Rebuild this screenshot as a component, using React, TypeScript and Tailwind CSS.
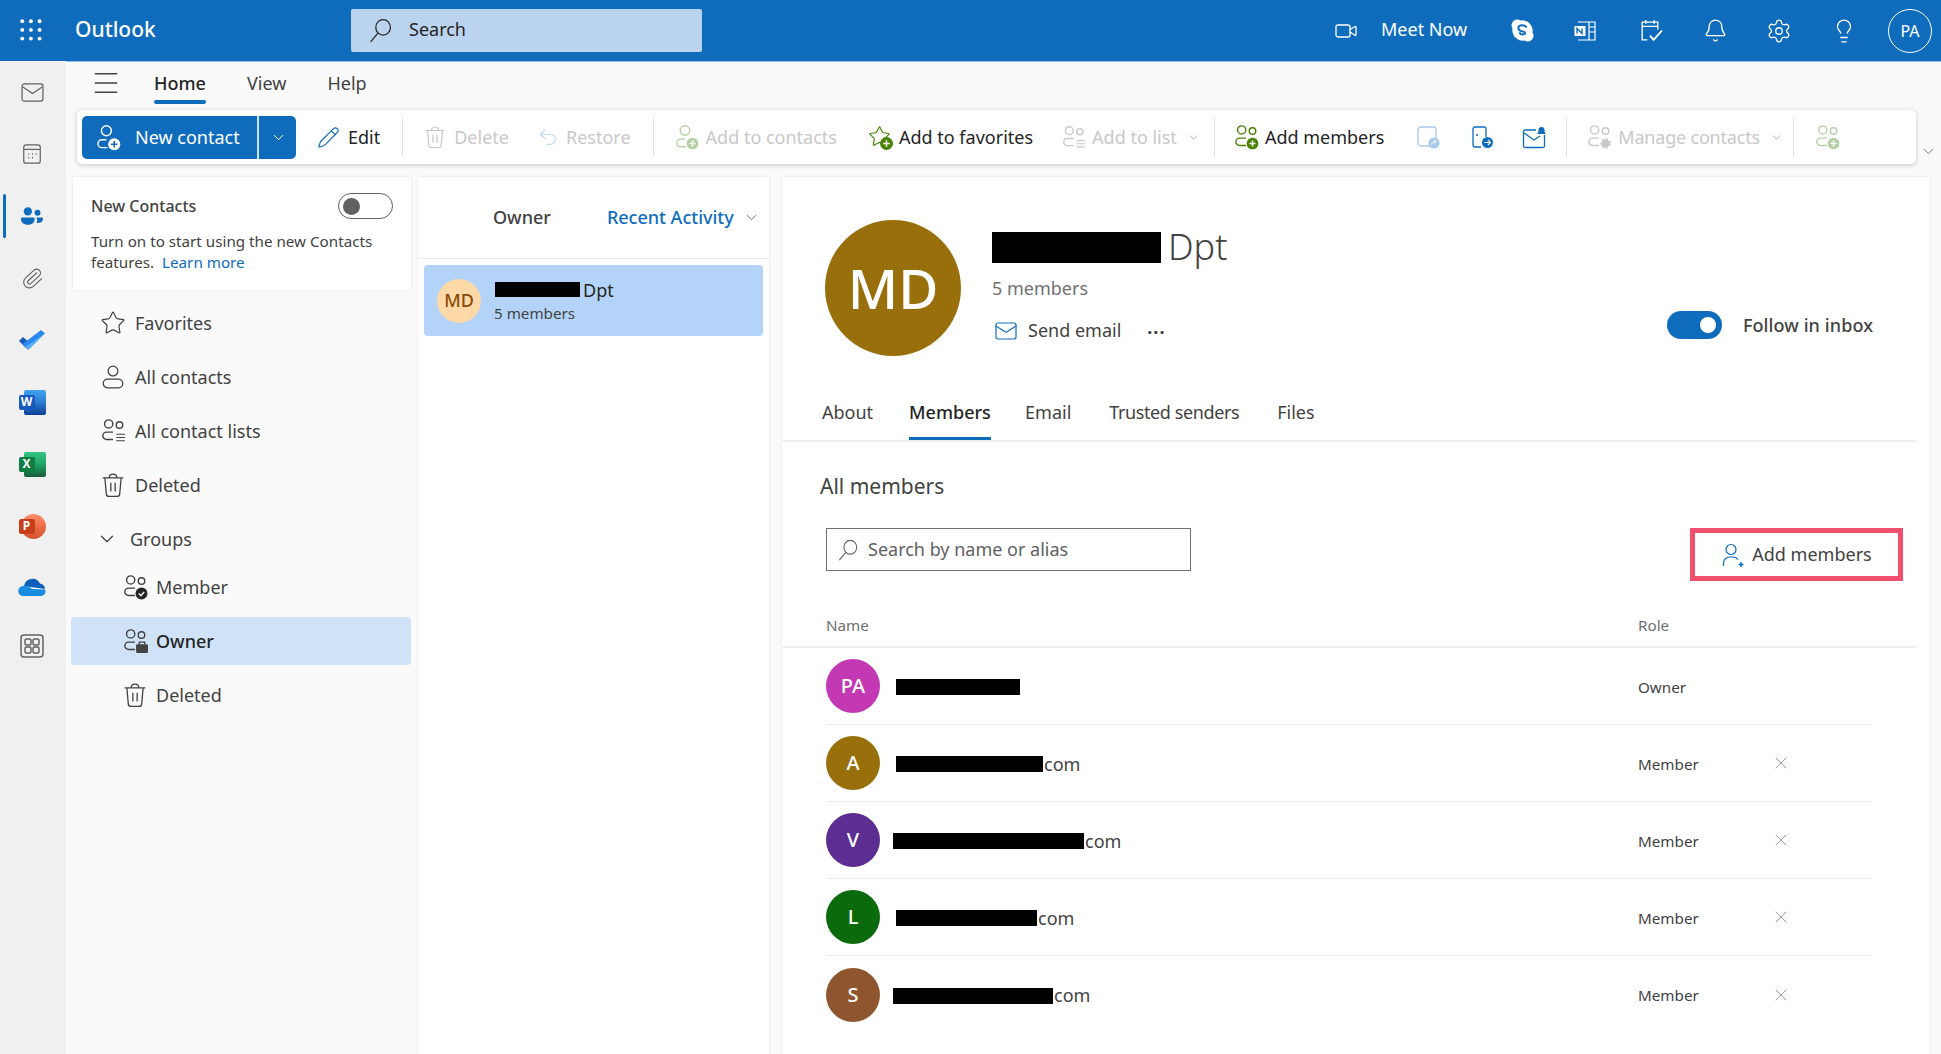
import { ChevronDown, X, Star, Menu, Video, Bell, Settings, Lightbulb, Pencil, Undo2, Mail, Paperclip } from "lucide-react"

type IconProps = { className?: string }

// group glyph shared by the ribbon and the folder list
function Group({ className, badge }: IconProps & { badge?: React.ReactNode }) {
  return (
    <svg viewBox="0 0 24 24" fill="none" stroke="currentColor" strokeWidth="1.3" className={className}>
      <circle cx="8" cy="5.5" r="3.8" />
      <circle cx="18" cy="6.5" r="3" />
      <path d="M12 13H6a3.2 3.2 0 0 0 0 6.800h6" />
      {badge}
    </svg>
  )
}

function Person({ className, badge }: IconProps & { badge?: React.ReactNode }) {
  return (
    <svg viewBox="0 0 24 24" fill="none" stroke="currentColor" strokeWidth="1.3" className={className}>
      <circle cx="11" cy="6" r="4.4" />
      <path d="M11 14H7a3.5 3.5 0 0 0 0 7h5" />
      {badge}
    </svg>
  )
}

function PersonAdd({ className }: IconProps) {
  return (
    <svg viewBox="0 0 24 24" fill="none" stroke="currentColor" strokeWidth="1.2" className={className}>
      <circle cx="10" cy="6.500" r="5" />
      <path d="M2.500 23v-3a6 6 0 0 1 6-6h3.500a6 6 0 0 1 5 2.800" />
      <path d="M20 19v5M17.500 21.500h5" strokeWidth="1.500" />
    </svg>
  )
}

function Trash({ className }: IconProps) {
  return (
    <svg viewBox="0 0 24 24" fill="none" stroke="currentColor" strokeWidth="1.2" className={className}>
      <path d="M2.500 5.500h19M8.500 5.500c0-2 1.500-3.500 3.500-3.500s3.500 1.500 3.500 3.500" />
      <path d="m4.500 5.500 1.300 14.500a2.500 2.500 0 0 0 2.500 2.500h7.400a2.500 2.500 0 0 0 2.500-2.500l1.300-14.500" />
      <path d="M10 10v8M14 10v8" />
    </svg>
  )
}

function SearchLens({ className }: IconProps) {
  return (
    <svg viewBox="0 0 24 24" fill="none" stroke="currentColor" strokeWidth="1.2" className={className}>
      <ellipse cx="14.500" cy="9" rx="7" ry="7.500" />
      <path d="M9.500 14.500 2.500 23" />
    </svg>
  )
}

const plusBadge = (fill: string) => (
  <g>
    <circle cx="18" cy="18" r="5.4" fill={fill} stroke="none" />
    <path d="M18 15.200v5.600M15.200 18h5.600" stroke="#fff" strokeWidth="1.400" />
  </g>
)

function Grid3() {
  return (
    <svg viewBox="0 0 24 24" className="w-[26px] h-[26px]" fill="#fff">
      {[3, 11, 19].flatMap((y) =>
        [3, 11, 19].map((x) => <circle key={`${x}-${y}`} cx={x} cy={y} r="1.8" />),
      )}
    </svg>
  )
}

function Skype() {
  return (
    <svg viewBox="0 0 24 24" className="w-[25px] h-[25px]">
      <path d="M7 1.500a5.500 5.500 0 0 1 3 .9 10 10 0 0 1 11.600 11.600 5.500 5.500 0 0 1-7.600 7.600A10 10 0 0 1 2.400 10 5.500 5.500 0 0 1 7 1.500z" fill="#fff" />
      <path d="M16 9.200c-.8-1.500-2.300-2.200-4.200-2.200-2.300 0-3.800 1.200-3.800 2.900 0 3.700 6.500 2.300 6.500 4.600 0 .8-.9 1.300-2.400 1.300-1.500 0-2.500-.6-3.200-1.900" fill="none" stroke="#0f6cbd" strokeWidth="1.900" />
    </svg>
  )
}

function OneNote() {
  return (
    <svg viewBox="0 0 24 24" className="w-[24px] h-[24px]" fill="none" stroke="#fff" strokeWidth="1.200">
      <path d="M5 3h17v18H5" />
      <path d="M16 3v18M16 8h6M16 13h6" />
      <rect x="1.500" y="7" width="11" height="10" fill="#fff" stroke="none" />
      <path d="M4 14.500v-5l5 5v-5" stroke="#0f6cbd" strokeWidth="1.400" />
    </svg>
  )
}

function Tasks() {
  return (
    <svg viewBox="0 0 24 24" className="w-[25px] h-[25px]" fill="none" stroke="#fff" strokeWidth="1.300">
      <path d="M9 21H4V4h15v7M4 8h15M7.500 2v3.500M15.500 2v3.500" />
      <path d="M11.500 17l3.500 4 8-9" strokeWidth="1.800" />
    </svg>
  )
}

function TodoLogo() {
  return (
    <svg viewBox="0 0 28 24" className="w-[28px] h-[24px]">
      <path d="M1 13l4-4 7 6-4 5z" fill="#185abd" />
      <path d="M8 20 4.500 16 23 2l4 3.500z" fill="#2b88f0" />
      <path d="M27 5.500 12 20.500c-2 2-3 1-4-.5l-1-1 8-5z" fill="#5ab0f5" />
    </svg>
  )
}

function OfficeTile({ letter, back, front }: { letter: string; back: React.ReactNode; front: string }) {
  return (
    <div className="relative w-[27px] h-[25px]">
      {back}
      <div
        className={`absolute left-0 top-[5px] w-[16px] h-[15px] rounded-[2px] ${front} flex items-center justify-center text-white text-[12px] font-bold leading-none`}
      >
        {letter}
      </div>
    </div>
  )
}

function OneDrive() {
  return (
    <svg viewBox="0 0 28 19" className="w-[28px] h-[19px]">
      <path d="M6 9a8.500 8.500 0 0 1 16-2.500A6 6 0 0 1 27 12z" fill="#0b5fb8" />
      <path d="M5.500 19A5 5 0 0 1 5 9c4-1 7 1 9 3l13 .5c1.500 3-.5 6.500-4 6.500z" fill="#1a8ce0" />
    </svg>
  )
}

function AppsTile() {
  return (
    <svg viewBox="0 0 24 24" className="w-[24px] h-[24px]" fill="none" stroke="#616161" strokeWidth="1.500">
      <rect x="1" y="1" width="22" height="22" rx="3" />
      <rect x="5" y="5" width="6" height="6" rx="1.500" />
      <rect x="13" y="5" width="6" height="6" rx="1.500" />
      <rect x="5" y="13" width="6" height="6" rx="1.500" />
      <rect x="13" y="13" width="6" height="6" rx="1.500" />
    </svg>
  )
}

function MailOutline() {
  return (
    <svg viewBox="0 0 24 20" className="w-[23px] h-[19px]" fill="none" stroke="#616161" strokeWidth="1.300">
      <rect x="1" y="1" width="22" height="18" rx="2.500" />
      <path d="m1.500 4 10.500 7 10.500-7" />
    </svg>
  )
}

function CalendarOutline() {
  return (
    <svg viewBox="0 0 24 24" className="w-[22px] h-[22px]" fill="none" stroke="#616161" strokeWidth="1.300">
      <rect x="3" y="2" width="18" height="20" rx="2.500" />
      <path d="M3 7h18" />
      <path d="M8 12h1M12 12h1M16 12h1M8 16h1M12 16h1" strokeWidth="1.800" />
    </svg>
  )
}

function PeopleSolid() {
  return (
    <svg viewBox="0 0 26 22" className="w-[24px] h-[21px]" fill="#0f6cbd">
      <circle cx="8.500" cy="5.500" r="4.500" />
      <circle cx="19" cy="7" r="3.200" />
      <path d="M1 13.500c0-1 1-1.500 2-1.500h11c1 0 2 .5 2 1.500 0 4-3 6.500-7.500 6.500S1 17.500 1 13.500z" />
      <path d="M17.500 12H23c1 0 2 .5 2 1.500 0 2.500-2 4.500-5 4.500h-2c.5-1 .8-3 .3-4.500z" />
    </svg>
  )
}

function RailItem({ children, active, pull }: { children: React.ReactNode; active?: boolean; pull?: boolean }) {
  return (
    <div className={`relative h-[62px] pr-[2px] flex items-center justify-center ${pull ? "-mt-[2px]" : ""}`}>
      {active && <div className="absolute left-[3px] top-[9px] h-[44px] w-[3px] rounded-full bg-[#0f6cbd]" />}
      {children}
    </div>
  )
}

function Rail() {
  return (
    <aside className="w-[66px] shrink-0 bg-[#f0f0f0] flex flex-col -mt-[1px]">
      <RailItem><MailOutline /></RailItem>
      <RailItem><CalendarOutline /></RailItem>
      <RailItem active><PeopleSolid /></RailItem>
      <RailItem><Paperclip className="w-[23px] h-[23px] text-[#616161] rotate-[3deg]" strokeWidth={1.200} /></RailItem>
      <RailItem><TodoLogo /></RailItem>
      <RailItem>
        <OfficeTile
          letter="W"
          front="bg-[#185abd]"
          back={<div className="absolute right-0 top-0 w-[22px] h-[25px] rounded-[2px] bg-gradient-to-b from-[#41a5ee] via-[#2b7cd3] to-[#103f91]" />}
        />
      </RailItem>
      <RailItem>
        <OfficeTile
          letter="X"
          front="bg-[#107c41]"
          back={<div className="absolute right-0 top-0 w-[22px] h-[25px] rounded-[2px] bg-gradient-to-b from-[#33c481] via-[#21a366] to-[#185c37]" />}
        />
      </RailItem>
      <RailItem>
        <OfficeTile
          letter="P"
          front="bg-[#c43e1c]"
          back={<div className="absolute right-0 top-0 w-[25px] h-[25px] rounded-full bg-gradient-to-b from-[#ff8f6b] via-[#ed6c47] to-[#d35230]" />}
        />
      </RailItem>
      <RailItem pull><OneDrive /></RailItem>
      <RailItem pull><AppsTile /></RailItem>
    </aside>
  )
}

function TopBar() {
  return (
    <header className="h-[62px] shrink-0 bg-[#0f6cbd] flex items-center text-white border-b border-[#8fc0ea]">
      <div className="w-[63px] flex justify-center"><Grid3 /></div>
      <span className="ml-[12px] w-[276px] text-[21px] font-medium -mt-[1px]">Outlook</span>
      <div className="w-[351px] h-[43px] rounded-[2px] bg-[#bad3ee] flex items-center text-[#242424]">
        <SearchLens className="ml-[17px] w-[25px] h-[25px]" />
        <span className="ml-[16px] text-[18px] -mt-[2px]">Search</span>
      </div>
      <Video className="ml-[632px] w-[24px] h-[24px]" strokeWidth={1.300} />
      <span className="ml-[23px] w-[129px] text-[18px] -mt-[3px]">Meet Now</span>
      <Skype />
      <div className="ml-[38px]"><OneNote /></div>
      <div className="ml-[41px]"><Tasks /></div>
      <Bell className="ml-[40px] w-[25px] h-[25px]" strokeWidth={1.200} />
      <Settings className="ml-[38px] w-[26px] h-[26px]" strokeWidth={1.200} />
      <Lightbulb className="ml-[39px] w-[26px] h-[26px]" strokeWidth={1.200} />
      <div className="ml-[31px] w-[44px] h-[44px] rounded-full border-[1.500px] border-white flex items-center justify-center text-[16px]">PA</div>
    </header>
  )
}

function TabStrip() {
  return (
    <div className="h-[48px] pb-[6px] flex items-center text-[#424242] text-[18px]">
      <Menu className="ml-[24px] w-[32px] h-[32px]" strokeWidth={1.100} />
      <div className="relative ml-[32px] w-[52px] text-[#242424] font-medium">
        Home
        <div className="absolute left-0 right-0 -bottom-[7px] h-[4px] rounded-full bg-[#0f6cbd]" />
      </div>
      <span className="ml-[41px]">View</span>
      <span className="ml-[41px]">Help</span>
    </div>
  )
}

function Divider({ left }: { left: string }) {
  return <div className={`h-[38px] w-px bg-[#e0e0e0] ${left}`} />
}

function Ribbon() {
  const dim = "text-[#c8c8c8]"
  const listLines = <path d="M15 15h8M15 18h8M15 21h8" strokeWidth="1" />
  const gear = <circle cx="18" cy="18" r="3.500" fill="currentColor" strokeWidth="2.500" strokeDasharray="2 1.200" />
  return (
    <div className="flex">
      <div className="ml-[11px] w-[1839px] h-[54px] rounded-[5px] bg-white shadow-[0_1px_5px_rgba(0,0,0,0.22)] flex items-center text-[18px] text-[#242424] whitespace-nowrap">
        <div className="ml-[5px] w-[214px] h-[43px] rounded-[5px] bg-[#0f6cbd] flex text-white items-center">
          <Person className="ml-[12px] w-[27px] h-[27px]" badge={<g><circle cx="18" cy="18" r="5.400" fill="#fff" stroke="none" /><path d="M18 15.200v5.600M15.200 18h5.600" stroke="#0f6cbd" strokeWidth="1.400" /></g>} />
          <span className="ml-[14px] w-[122px]">New contact</span>
          <div className="h-full w-[2px] bg-[#cfe4f7]" />
          <ChevronDown className="ml-[11px] w-[17px] h-[17px]" strokeWidth={1.400} />
        </div>
        <Pencil className="ml-[21px] w-[23px] h-[23px] text-[#0f6cbd]" strokeWidth={1.200} />
        <span className="ml-[8px]">Edit</span>
        <Divider left="ml-[22px]" />
        <Trash className={`ml-[20px] w-[24px] h-[24px] ${dim}`} />
        <span className={`ml-[7px] ${dim}`}>Delete</span>
        <Undo2 className="ml-[28px] w-[22px] h-[22px] text-[#bcd6ef]" strokeWidth={1.200} />
        <span className={`ml-[7px] ${dim}`}>Restore</span>
        <Divider left="ml-[22px]" />
        <Person className="ml-[19px] w-[26px] h-[26px] text-[#b5d0a5]" badge={plusBadge("#b5d0a5")} />
        <span className={`ml-[7px] ${dim}`}>Add to contacts</span>
        <div className="relative ml-[31px] w-[25px] h-[25px]">
          <Star className="w-[23px] h-[23px] text-[#498205]" strokeWidth={1.200} />
          <svg viewBox="0 0 12 12" className="absolute right-0 bottom-0 w-[13px] h-[13px]"><circle cx="6" cy="6" r="6" fill="#498205" /><path d="M6 3v6M3 6h6" stroke="#fff" strokeWidth="1.300" /></svg>
        </div>
        <span className="ml-[6px]">Add to favorites</span>
        <Group className={`ml-[28px] w-[25px] h-[25px] ${dim}`} badge={listLines} />
        <span className={`ml-[6px] ${dim}`}>Add to list</span>
        <ChevronDown className={`ml-[10px] w-[13px] h-[13px] ${dim}`} />
        <Divider left="ml-[14px]" />
        <Group className="ml-[18px] w-[26px] h-[26px] text-[#498205]" badge={plusBadge("#498205")} />
        <span className="ml-[6px]">Add members</span>
        <svg viewBox="0 0 24 24" className="ml-[32px] w-[24px] h-[24px]" fill="none" stroke="#a9c9ea" strokeWidth="1.300">
          <rect x="2" y="2" width="18" height="19" rx="3" />
          <circle cx="18" cy="18" r="5.500" fill="#a9c9ea" stroke="none" />
          <path d="M15.500 19.500c.5-2 2-3 4-3M18 14.500l2 2-2 2" stroke="#fff" strokeWidth="1" />
        </svg>
        <svg viewBox="0 0 24 24" className="ml-[30px] w-[24px] h-[24px]" fill="none" stroke="#0f6cbd" strokeWidth="1.300">
          <path d="M11 22H5a2 2 0 0 1-2-2V4a2 2 0 0 1 2-2h9a2 2 0 0 1 2 2v8" />
          <circle cx="7" cy="10" r="1" fill="#0f6cbd" stroke="none" />
          <circle cx="17.500" cy="17.500" r="5.500" fill="#0f6cbd" stroke="none" />
          <path d="M14.500 17.500h6M18 15l2.500 2.500L18 20" stroke="#fff" strokeWidth="1.100" />
        </svg>
        <svg viewBox="0 0 24 24" className="ml-[28px] w-[24px] h-[24px]" fill="none" stroke="#0f6cbd" strokeWidth="1.300">
          <path d="M14 5H3a1.500 1.500 0 0 0-1.500 1.500V21A1.500 1.500 0 0 0 3 22.500h18a1.500 1.500 0 0 0 1.500-1.500V10" />
          <path d="m2 8 10 7 6-4" />
          <path d="M15 9c1-1 1.500-2 1.500-4a3 3 0 0 1 6 0c0 2 .5 3 1.500 4z" fill="#0f6cbd" stroke="none" />
        </svg>
        <Divider left="ml-[20px]" />
        <Group className={`ml-[19px] w-[26px] h-[26px] ${dim}`} badge={gear} />
        <span className={`ml-[6px] tracking-[-0.2px] ${dim}`}>Manage contacts</span>
        <ChevronDown className={`ml-[10px] w-[13px] h-[13px] ${dim}`} />
        <Divider left="ml-[10px]" />
        <Group className="ml-[20px] w-[26px] h-[26px] text-[#b5d0a5]" badge={plusBadge("#b5d0a5")} />
      </div>
      <ChevronDown className="ml-[4px] mt-[33px] w-[17px] h-[17px] text-[#616161]" strokeWidth={1.200} />
    </div>
  )
}

function NavRow({ icon, label, indent, selected }: { icon: React.ReactNode; label: string; indent?: boolean; selected?: boolean }) {
  return (
    <div className={`flex items-center text-[18px] text-[#424242] rounded-[4px] ${selected ? "h-[48px] my-[3px] -ml-[2px] pl-[51px] bg-[#cfe2f8]" : indent ? "h-[54px] pl-[49px]" : "h-[54px] pl-[27px]"}`}>
      <div className={indent ? "w-[34px] flex items-center" : "w-[35px] flex items-center"}>{icon}</div>
      <span className={selected ? "text-[#242424] font-medium" : ""}>{label}</span>
    </div>
  )
}

function Sidebar() {
  const ic = "w-[26px] h-[26px] text-[#424242]"
  return (
    <div className="w-[338px] shrink-0 flex flex-col">
      <div className="h-[113px] bg-white shadow-[0_0_2px_rgba(0,0,0,0.12)] px-[18px] pt-[16px] text-[#424242]">
        <div className="flex items-center justify-between">
          <span className="text-[16px] font-medium">New Contacts</span>
          <div className="w-[55px] h-[26px] rounded-full border-[1.500px] border-[#616161] flex items-center pl-[4px]">
            <div className="w-[17px] h-[17px] rounded-full bg-[#616161]" />
          </div>
        </div>
        <p className="mt-[12px] text-[15.2px] leading-[21px]">
          Turn on to start using the new Contacts<br />
          features.<span className="ml-[8px] text-[#0f6cbd]">Learn more</span>
        </p>
      </div>
      <div className="mt-[6px]">
        <NavRow icon={<Star className={ic} strokeWidth={1.100} />} label="Favorites" />
        <NavRow
          icon={
            <svg viewBox="0 0 24 24" className={ic} fill="none" stroke="currentColor" strokeWidth="1.200">
              <circle cx="12" cy="6.500" r="4.500" />
              <rect x="3" y="14" width="18" height="8" rx="4" />
            </svg>
          }
          label="All contacts"
        />
        <NavRow
          icon={<Group className={ic} badge={<path d="M15 15h8M15 18h8M15 21h8" strokeWidth="1" />} />}
          label="All contact lists"
        />
        <NavRow icon={<Trash className={ic} />} label="Deleted" />
        <div className="h-[54px] flex items-center pl-[23px] text-[18px] text-[#424242]">
          <ChevronDown className="w-[22px] h-[22px]" strokeWidth={1.300} />
          <span className="ml-[12px]">Groups</span>
        </div>
        <div className="-mt-[6px]">
          <NavRow
            icon={<Group className={ic} badge={<g><circle cx="18" cy="18" r="5.500" fill="#242424" stroke="none" /><path d="m15.500 18 2 2 3-3.500" stroke="#fff" /></g>} />}
            label="Member"
            indent
          />
          <NavRow
            icon={<Group className={ic} badge={<g><rect x="13" y="15" width="11" height="8" rx="1" fill="#424242" stroke="none" /><path d="M16 15v-2h5v2" /></g>} />}
            label="Owner"
            indent
            selected
          />
          <NavRow icon={<Trash className={ic} />} label="Deleted" indent />
        </div>
      </div>
    </div>
  )
}

function ListPane() {
  return (
    <div className="ml-[7px] w-[351px] shrink-0 bg-white shadow-[0_0_2px_rgba(0,0,0,0.12)]">
      <div className="h-[82px] border-b border-[#e8e8e8] flex items-center text-[18px] font-medium">
        <span className="ml-[75px] text-[#424242]">Owner</span>
        <span className="ml-[56px] text-[#0f6cbd]">Recent Activity</span>
        <ChevronDown className="ml-[9px] w-[17px] h-[17px] text-[#616161]" strokeWidth={1.200} />
      </div>
      <div className="mx-[6px] mt-[6px] h-[71px] rounded-[4px] bg-[#b3d4f8] flex items-center">
        <div className="ml-[13px] w-[44px] h-[44px] rounded-full bg-[#fdd9a8] flex items-center justify-center text-[#8a4b08] text-[18px] font-medium">MD</div>
        <div className="ml-[13px]">
          <div className="ml-[1px] flex items-center text-[18px] leading-[24px] text-[#242424]">
            <div className="w-[85px] h-[15px] bg-black mr-[3px]" />
            Dpt
          </div>
          <div className="text-[15.2px] leading-[22px] text-[#424242]">5 members</div>
        </div>
      </div>
    </div>
  )
}

type Member = { initial: string; color: string; bar: number; offset: number; suffix: string; role: string }

const members: Member[] = [
  { initial: "PA", color: "bg-[#c239b3]", bar: 124, offset: 0, suffix: "", role: "Owner" },
  { initial: "A", color: "bg-[#986f0b]", bar: 147, offset: 0, suffix: "com", role: "Member" },
  { initial: "V", color: "bg-[#5c2e91]", bar: 191, offset: -3, suffix: "com", role: "Member" },
  { initial: "L", color: "bg-[#0b6a0b]", bar: 141, offset: 0, suffix: "com", role: "Member" },
  { initial: "S", color: "bg-[#8e562e]", bar: 160, offset: -3, suffix: "com", role: "Member" },
]

function MemberRow({ m, last }: { m: Member; last: boolean }) {
  return (
    <div className={`ml-[44px] mr-[57px] h-[77px] flex items-center ${last ? "" : "border-b border-[#ececec]"}`}>
      <div className={`w-[54px] h-[54px] rounded-full ${m.color} flex items-center justify-center text-white text-[20px] font-medium`}>{m.initial}</div>
      <div className={`flex-1 flex items-center pt-[2px] text-[18px] text-[#424242] ${m.offset ? "ml-[13px]" : "ml-[16px]"}`}>
        <div className="h-[16px] bg-black" style={{ width: m.bar }} />
        {m.suffix && <span className="ml-[1px]">{m.suffix}</span>}
      </div>
      <span className="w-[133px] pt-[2px] text-[15.2px] text-[#424242]">{m.role}</span>
      {m.role === "Member" ? <X className="w-[20px] h-[20px] text-[#8a8a8a]" strokeWidth={1} /> : <span className="w-[20px]" />}
      <span className="w-[82px]" />
    </div>
  )
}

function DetailPane() {
  return (
    <div className="ml-[13px] w-[1148px] shrink-0 bg-white shadow-[0_0_2px_rgba(0,0,0,0.12)]">
      <div className="h-[265px] mr-[13px] border-b-[2px] border-[#f0f0f0] pl-[43px] flex flex-col">
        <div className="mt-[43px] flex">
          <div className="w-[136px] h-[136px] rounded-full bg-[#986f0b] flex items-center justify-center text-white text-[55px] font-medium">MD</div>
          <div className="ml-[31px] flex-1 pr-[44px]">
            <div className="mt-[4px] h-[46px] flex items-center text-[36px] font-light text-[#424242]">
              <div className="w-[169px] h-[31px] bg-black mr-[7px]" />
              Dpt
            </div>
            <div className="mt-[7px] text-[18px] text-[#707070] leading-[22px]">5 members</div>
            <div className="mt-[18px] flex items-center">
              <div className="ml-[2px] flex-1 flex items-center">
                <Mail className="w-[24px] h-[24px] text-[#0f6cbd]" strokeWidth={1.200} />
                <span className="ml-[10px] text-[18px] text-[#424242]">Send email</span>
                <span className="ml-[26px] text-[18px] font-bold tracking-[1px] leading-none -mt-[8px] text-[#424242]">...</span>
              </div>
              <div className="-mt-[11px] w-[55px] h-[28px] rounded-full bg-[#0f6cbd] flex items-center justify-end pr-[6px]">
                <div className="w-[16px] h-[16px] rounded-full bg-white" />
              </div>
              <span className="ml-[21px] -mt-[10px] text-[18px] font-medium tracking-[0.1px] text-[#424242]">Follow in inbox</span>
            </div>
          </div>
        </div>
        <div className="mt-auto flex items-end text-[18px] text-[#424242] h-[42px]">
          <span className="-ml-[3px] pb-[14px]">About</span>
          <span className="relative ml-[36px] w-[82px] pb-[14px] text-[#242424] font-medium">
            Members
            <div className="absolute left-0 right-0 bottom-0 h-[3px] bg-[#0f6cbd]" />
          </span>
          <span className="ml-[34px] pb-[14px]">Email</span>
          <span className="ml-[38px] pb-[14px] tracking-[-0.4px]">Trusted senders</span>
          <span className="ml-[38px] pb-[14px]">Files</span>
        </div>
      </div>
      <div className="ml-[38px] mt-[30px] text-[21px] leading-[28px] text-[#424242]">All members</div>
      <div className="mt-[28px] ml-[44px] mr-[27px] flex items-start justify-between">
        <div className="w-[365px] h-[43px] border-[1.500px] border-[#707070] flex items-center text-[18px] text-[#616161]">
          <SearchLens className="ml-[10px] w-[22px] h-[22px]" />
          <span className="ml-[9px]">Search by name or alias</span>
        </div>
        <div className="w-[213px] h-[53px] border-[5px] border-[#f0506e] flex items-center justify-center text-[18px] text-[#424242]">
          <PersonAdd className="w-[24px] h-[24px] text-[#0f6cbd]" />
          <span className="ml-[7px]">Add members</span>
        </div>
      </div>
      <div className="mt-[24px] mr-[13px] h-[43px] border-b-[2px] border-[#f0f0f0] pl-[44px] flex items-center text-[15.2px] text-[#707070]">
        <span className="w-[812px]">Name</span>
        <span>Role</span>
      </div>
      {members.map((m, i) => (
        <MemberRow key={m.initial} m={m} last={i === members.length - 1} />
      ))}
    </div>
  )
}

export default function App() {
  return (
    <div className="w-[1941px] h-[1054px] overflow-hidden flex flex-col bg-[#fafafa] font-['Noto_Sans',sans-serif]">
      <TopBar />
      <div className="flex-1 flex min-h-0">
        <Rail />
        <div className="flex-1 flex flex-col">
          <TabStrip />
          <Ribbon />
          <div className="flex-1 flex pl-[7px] pt-[13px] min-h-0">
            <Sidebar />
            <ListPane />
            <DetailPane />
          </div>
        </div>
      </div>
    </div>
  )
}
